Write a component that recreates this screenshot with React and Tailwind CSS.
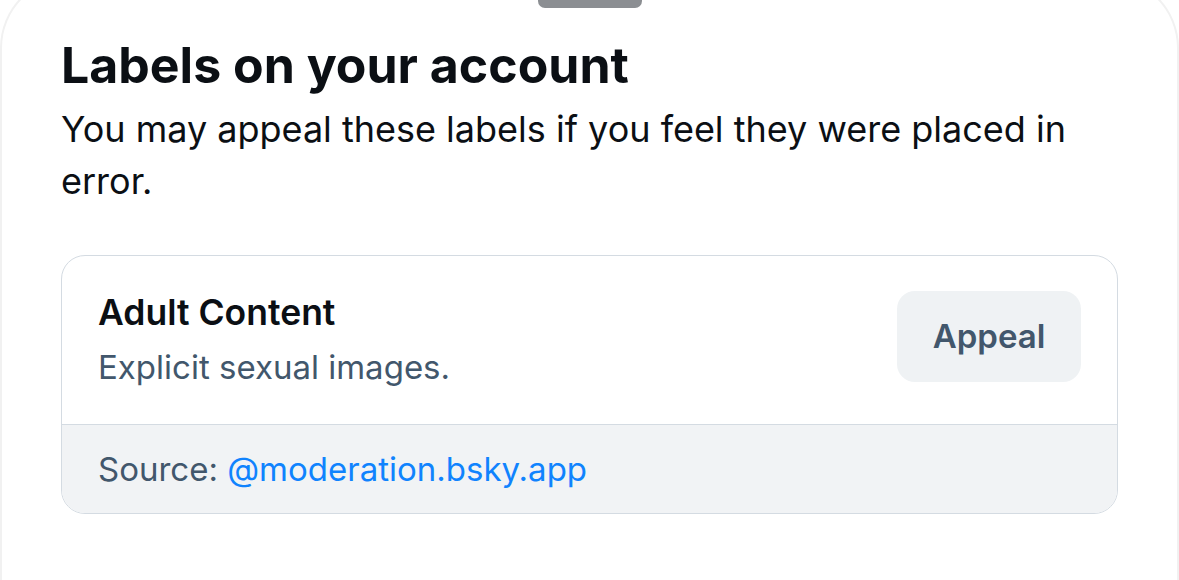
export default function App() {
  return (
    <div className="w-[1179px] h-[580px] overflow-hidden bg-white" style={{ fontFamily: "Inter, 'Noto Sans', sans-serif" }}>
      <div className="relative h-[620px] rounded-t-[72px] border-x-[2px] border-t-[2px] border-[#f1f1f1] bg-white -mt-[24px] pt-[22px]">
        <div className="flex justify-center">
          <div className="w-[104px] h-[8px] rounded-b-[7px] bg-[#8b8e92]" />
        </div>
        <div className="px-[59px] pt-[25px]">
          <h1 className="text-[50px] leading-[64px] font-bold text-[#0b0f14]">Labels on your account</h1>
          <p className="mt-[6px] text-[36px] leading-[52px] text-[#0b0f14] w-[1040px]">
            You may appeal these labels if you feel they were placed in error.
          </p>
          <div className="mt-[48px] rounded-[24px] border-[1.5px] border-[#d4dbe2] overflow-hidden">
            <div className="flex items-start justify-between px-[36px] pt-[35px] pb-[35px]">
              <div className="flex flex-col">
                <div className="text-[35.5px] leading-[44px] font-semibold text-[#0b0f14]">Adult Content</div>
                <div className="mt-[10px] text-[33px] leading-[44px] text-[#42576c]">Explicit sexual images.</div>
              </div>
              <button className="w-[184px] h-[91px] rounded-[18px] bg-[#eff2f4] text-[33px] font-semibold text-[#42576c]">Appeal</button>
            </div>
            <div className="border-t-[1.5px] border-[#d4dbe2] bg-[#f1f3f5] px-[36px] pt-[22px] pb-[22px] text-[33px] leading-[44px] text-[#42576c]">
              Source: <span className="text-[#1083fe]">@moderation.bsky.app</span>
            </div>
          </div>
        </div>
      </div>
    </div>
  );
}
